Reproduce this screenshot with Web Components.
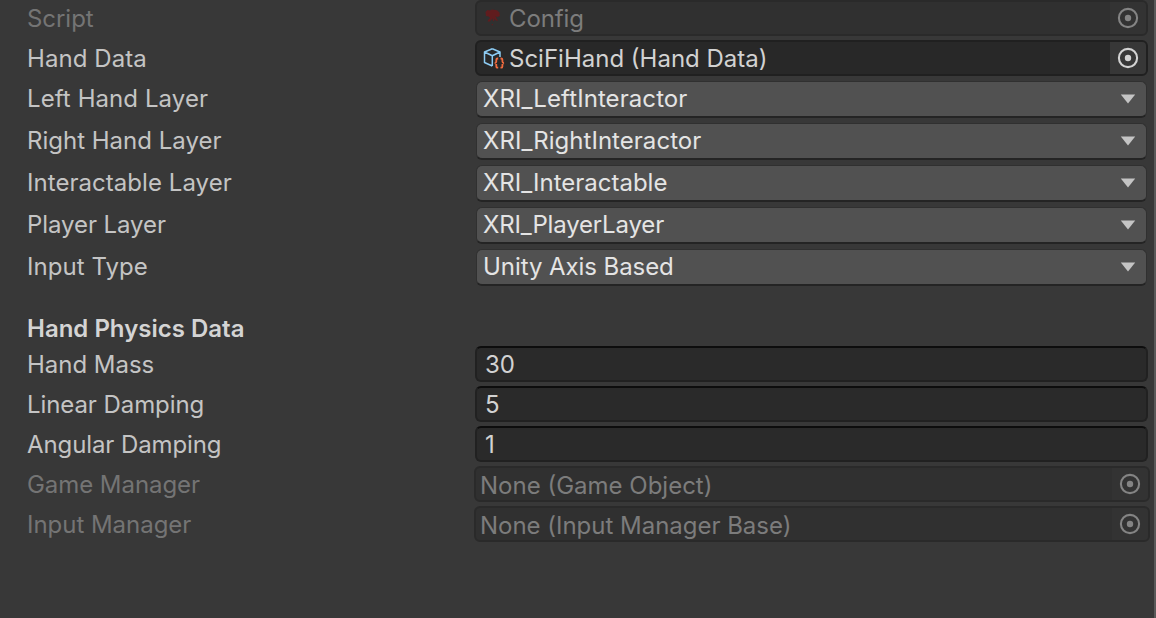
<!DOCTYPE html>
<html lang="en">
<head>
<meta charset="utf-8">
<title>Config</title>
<style>
html,body{margin:0;height:100%;background:#383838;overflow:hidden}
body{font-family:Inter,"Noto Sans",sans-serif}
</style>
</head>
<body>
<inspector-panel>
  <inspector-row label="Script" disabled h="40" ls="-.05"><object-field disabled value="Config" icon="script" ls="-.1"></object-field></inspector-row>
  <inspector-row label="Hand Data" h="41" ls=".08"><object-field value="SciFiHand (Hand Data)" icon="asset" ls="0"></object-field></inspector-row>
  <inspector-row label="Left Hand Layer" h="42" ls=".08"><drop-down value="XRI_LeftInteractor" ls=".08"></drop-down></inspector-row>
  <inspector-row label="Right Hand Layer" h="42" ls="0"><drop-down value="XRI_RightInteractor" ls=".04"></drop-down></inspector-row>
  <inspector-row label="Interactable Layer" h="42" ls=".05"><drop-down value="XRI_Interactable" ls="0"></drop-down></inspector-row>
  <inspector-row label="Player Layer" h="42" ls="-.08"><drop-down value="XRI_PlayerLayer" ls="-.16"></drop-down></inspector-row>
  <inspector-row label="Input Type" h="42" ls=".05"><drop-down value="Unity Axis Based" ls="-.07"></drop-down></inspector-row>
  <inspector-heading>Hand Physics Data</inspector-heading>
  <inspector-row label="Hand Mass" h="40" ls="-.02"><number-field value="30"></number-field></inspector-row>
  <inspector-row label="Linear Damping" h="40" ls="-.08"><number-field value="5"></number-field></inspector-row>
  <inspector-row label="Angular Damping" h="40" ls="-.1"><number-field value="1"></number-field></inspector-row>
  <inspector-row label="Game Manager" disabled h="40" ls="-.06"><object-field disabled wide value="None (Game Object)" ls="0"></object-field></inspector-row>
  <inspector-row label="Input Manager" disabled h="40" ls="-.03"><object-field disabled wide value="None (Input Manager Base)" ls="-.02"></object-field></inspector-row>
</inspector-panel>
<script>
const ICONS = {
  script: `<svg width="22" height="22" viewBox="0 0 22 22" fill="#601c1e"><path d="M2.500 5L4.500 3L7 3.500L9 2.500L14 3.200L16.500 5.500L16.800 9L14.500 10L12.500 9.300L13.800 12L15 14L12.800 13.500L11.500 11.500L11 14.500L9.800 13.500L9.500 11.500L8 13L7 14.500H4.500L5.500 12.500L7.200 11L5.500 9.500L3 9Z"/><path d="M8.700 17h1.200v1.200h-1.200z"/></svg>`,
  asset: `<svg width="22" height="22" viewBox="0 0 22 22" fill="none"><path d="M9.300 1.700L17 5V10M9.300 1.700L1.500 5V15.500L9.300 19M1.500 5L9.300 8.700L17 5M9.300 8.700V19" stroke="#8ccbf3" stroke-width="1.500" stroke-linejoin="round"/><path d="M15.200 11.500h-.6q-1.300 0-1.300 1.300v1.800q0 1.200-1.500 1.500q1.500.3 1.500 1.500v1.800q0 1.300 1.300 1.300h.6M17.500 11.500h.6q1.300 0 1.300 1.300v1.800q0 1.200 1.500 1.500q-1.500.3-1.500 1.500v1.800q0 1.300-1.300 1.300h-.6" stroke="#f26b3e" stroke-width="1.800"/></svg>`
};
const make = (el, html) => { el.attachShadow({mode:'open'}).innerHTML = html; };
const tracking = el => `letter-spacing:${el.getAttribute('ls') || 0}px`;

customElements.define('inspector-panel', class extends HTMLElement {
  connectedCallback(){ make(this, `<style>
    :host{display:flex;flex-direction:column;box-sizing:border-box;height:618px;border-right:2px solid #595959;background:#383838;font-size:24px;line-height:36px;color:#c4c4c4;white-space:nowrap}
  </style><slot></slot>`); }
});

customElements.define('inspector-row', class extends HTMLElement {
  connectedCallback(){
    const h = this.getAttribute('h');
    make(this, `<style>
    :host{display:grid;grid-template-columns:447px 1fr;padding-left:27px;height:${h}px;flex:none;align-items:start}
    span{line-height:${h === '42' ? 36 : 38}px;${tracking(this)}}
    :host([disabled]) span{color:#747474}
  </style><span>${this.getAttribute('label')}</span><slot></slot>`); }
});

customElements.define('inspector-heading', class extends HTMLElement {
  connectedCallback(){ make(this, `<style>
    :host{display:block;height:35px;padding:20px 0 0 27px;flex:none;font-weight:600;color:#d4d4d4;letter-spacing:0}
  </style><slot></slot>`); }
});

customElements.define('drop-down', class extends HTMLElement {
  connectedCallback(){ make(this, `<style>
    :host{display:flex;align-items:center;justify-content:space-between;box-sizing:border-box;height:37px;margin:0 7px 0 2px;padding:0 10px 0 6px;background:#515151;border:1px solid #303030;border-bottom:2px solid #242424;border-radius:6px;color:#e4e4e4}
    span{line-height:34px;${tracking(this)}}
  </style><span>${this.getAttribute('value')}</span>
  <svg width="16" height="10" viewBox="0 0 16 10"><path d="M.800 .500H15.200L8 9.500Z" fill="#c4c4c4"/></svg>`); }
});

customElements.define('number-field', class extends HTMLElement {
  connectedCallback(){ make(this, `<style>
    :host{display:block;box-sizing:border-box;height:36px;margin:0 6px 0 1px;padding-left:8px;line-height:34px;background:#2a2a2a;border:2px solid #212121;border-top-color:#0d0d0d;border-radius:6px;color:#d2d2d2}
  </style><span>${this.getAttribute('value')}</span>`); }
});

customElements.define('object-field', class extends HTMLElement {
  connectedCallback(){
    const icon = ICONS[this.getAttribute('icon')] || '';
    make(this, `<style>
    :host{display:flex;box-sizing:border-box;height:36px;margin:0 6px 0 1px;background:#282828;border:2px solid #202020;border-radius:6px;color:#d2d2d2;overflow:hidden}
    :host([disabled]){background:#303030;border-color:#2a2a2a;color:#7c7c7c}
    :host([wide]){margin:0 4px 0 0}
    .v{display:flex;flex:1;align-items:flex-start;gap:4px;padding-left:6px}
    .v span{line-height:34px;${tracking(this)}}
    :host([wide]) .v{padding-left:4px}
    :host([wide]) .v span{line-height:36px}
    .pick{display:flex;width:36px;align-items:center;justify-content:center;background:#373737}
    :host([disabled]) .pick{background:#333;color:#848484}
    .v svg{flex:none;display:block;margin-top:5px}
  </style><div class="v">${icon}<span>${this.getAttribute('value')}</span></div>
  <div class="pick"><svg width="22" height="22" viewBox="0 0 22 22"><circle cx="11" cy="11" r="9.100" fill="none" stroke="currentColor" stroke-width="2.100"/><circle cx="11" cy="11" r="3.200" fill="currentColor"/></svg></div>`); }
});
</script>
</body>
</html>
